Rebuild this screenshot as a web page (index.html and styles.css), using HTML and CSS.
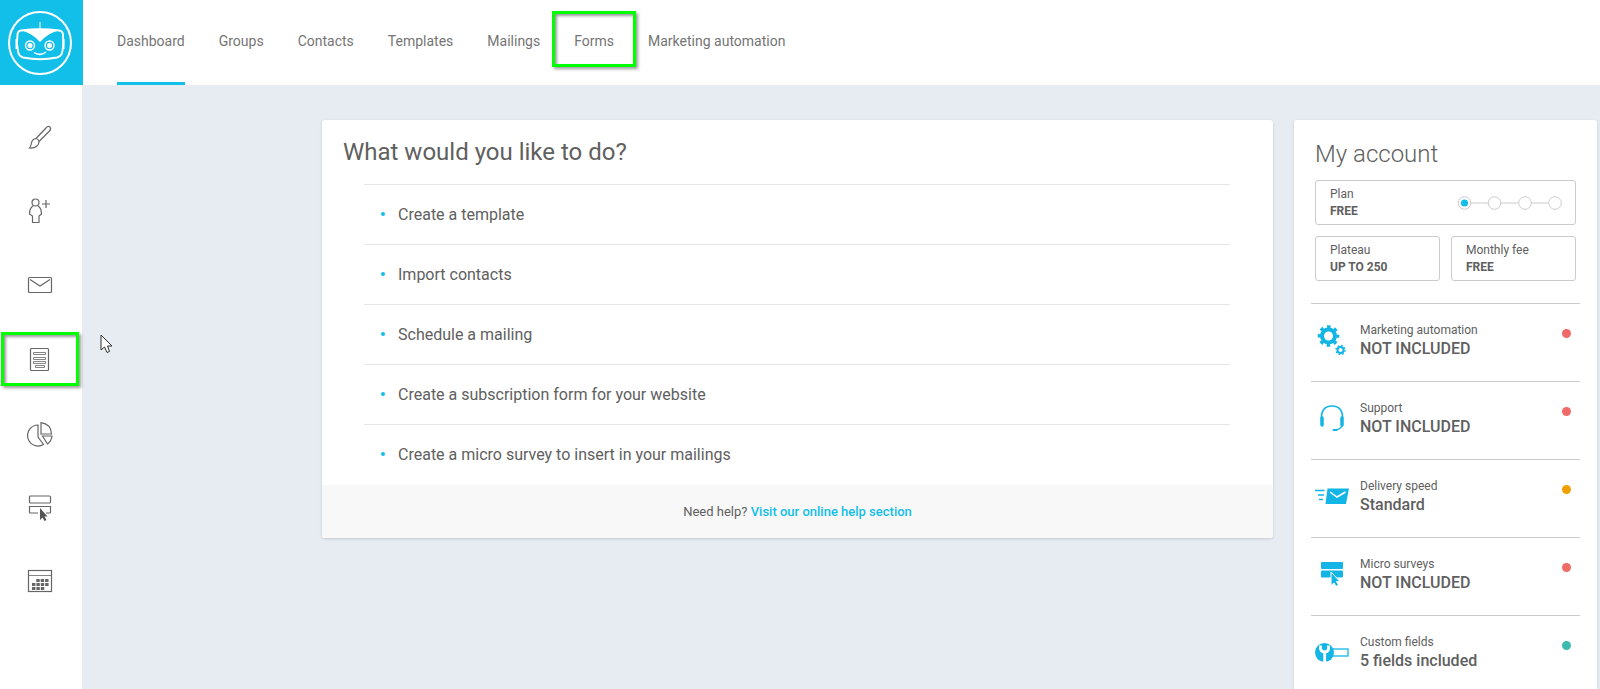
FILE: index.html
```html
<!DOCTYPE html>
<html lang="en">
<head>
    <meta charset="utf-8">
    <title>Dashboard</title>
    <meta name="viewport" content="width=device-width, initial-scale=1.0">
    <link rel="stylesheet" href="styles.css">
</head>
<body>
    <header class="topbar">
        <a href="#" class="logo" aria-label="Home">
            <svg width="66" height="66" viewBox="0 0 66 66" fill="none" stroke="#fff">
                <circle cx="33" cy="33" r="31" stroke-width="2"/>
                <path d="M33 12v9" stroke-width="1"/>
                <path d="M14 20.500Q33 18 52 20.500Q56 21 56 25Q57 33 55.500 41Q55 46 50 47.500Q33 51 16 47.500Q11.500 46 11 41Q9 33 10.500 25Q10.500 21 14 20.500Z" stroke-width="1.900"/>
                <path d="M16 21Q33 17 50 21Q40 24 33 32Q26 24 16 21Z" fill="#fff" stroke="none"/>
                <path d="M9.500 29v10M56.500 29v10" stroke-width="2"/>
                <circle cx="23" cy="35.500" r="4.500" stroke-width="1.400"/>
                <circle cx="42.500" cy="35.500" r="4.500" stroke-width="1.400"/>
                <circle cx="23" cy="35.500" r="2.500" fill="#fff" stroke="none"/>
                <circle cx="42.500" cy="35.500" r="2.500" fill="#fff" stroke="none"/>
                <path d="M27 42.500Q33 46.500 39 42" stroke-width="1.500"/>
            </svg>
        </a>
        <nav class="nav">
            <a href="#" class="active">Dashboard</a>
            <a href="#">Groups</a>
            <a href="#">Contacts</a>
            <a href="#">Templates</a>
            <a href="#">Mailings</a>
            <a href="#" class="marked">Forms</a>
            <a href="#">Marketing automation</a>
        </nav>
    </header>

    <div class="page">
        <nav class="sidebar">
            <a href="#" aria-label="Templates">
                <svg width="26" height="26" viewBox="0 0 26 26">
                    <path d="M9 14.500L19 4Q21 1.500 23 3Q24.500 5 22.500 7L12 17.500"/>
                    <path d="M9 14.500Q5 15 4.500 19Q4 22 2.500 24Q7 24.500 10 22Q12 20.500 12 17.500Q11.500 15 9 14.500Z"/>
                </svg>
            </a>
            <a href="#" aria-label="Contacts">
                <svg width="26" height="26" viewBox="0 0 26 26">
                    <circle cx="8.500" cy="4.500" r="3.500"/>
                    <path d="M6 8Q2.500 10 2.500 16L5.500 18V24.500H12V18L14.500 16Q14.500 10 11 8"/>
                    <path d="M19 2v8M15 6h8"/>
                </svg>
            </a>
            <a href="#" aria-label="Mailings">
                <svg width="26" height="26" viewBox="0 0 26 26">
                    <rect x="1.500" y="5.500" width="23" height="15" rx="1"/>
                    <path d="M3 7.500L13 14L23 7.500"/>
                </svg>
            </a>
            <a href="#" class="marked" aria-label="Forms">
                <svg width="26" height="26" viewBox="0 0 26 26">
                    <rect x="3.500" y="2.500" width="18" height="22" rx="1"/>
                    <path d="M6.500 6.500h12v2h-12zM6.500 11.500h12v2h-12zM6.500 15.500h12v2h-12zM8.500 19.500h9v2h-9z" stroke-width=".8"/>
                </svg>
            </a>
            <a href="#" aria-label="Reports">
                <svg width="26" height="28" viewBox="0 -3 26 28">
                    <path d="M11 3A10.500 10.500 0 1 0 16.500 22.500L11 15Z"/>
                    <path d="M14 .7V12H24.500Q24 2 14 .7Z"/>
                    <path d="M15.500 14H25Q24.500 19 20.500 22Z"/>
                </svg>
            </a>
            <a href="#" aria-label="Micro surveys">
                <svg width="26" height="26" viewBox="0 -1 26 26" overflow="visible">
                    <rect x="2.500" y="1" width="21" height="7" rx="1"/>
                    <path d="M11 18H3.500Q2.500 18 2.500 17V11.500H23.500V17Q23.500 18 22.500 18H19"/>
                    <path d="M13 13V25L15.500 22.500L17.500 26L19.500 25L17.500 21.500H20.500Z" fill="#555" stroke="none"/>
                </svg>
            </a>
            <a href="#" aria-label="Calendar">
                <svg width="26" height="26" viewBox="0 0 26 26">
                    <rect x="1.500" y="2.500" width="23" height="21"/>
                    <path d="M2 7.500h22" stroke-width=".8"/>
                    <path d="M9.300 12.500h12.700M5 16.500h17M5 20.500h12.500" stroke-width="3" stroke-dasharray="3.400 1"/>
                </svg>
            </a>
        </nav>

        <main class="content">
            <section class="card todo">
                <h1>What would you like to do?</h1>
                <ul class="actions">
                    <li><a href="#">Create a template</a></li>
                    <li><a href="#">Import contacts</a></li>
                    <li><a href="#">Schedule a mailing</a></li>
                    <li><a href="#">Create a subscription form for your website</a></li>
                    <li><a href="#">Create a micro survey to insert in your mailings</a></li>
                </ul>
                <p class="help">Need help? <a href="#">Visit our online help section</a></p>
            </section>

            <aside class="card account">
                <h2>My account</h2>
                <div class="boxes">
                    <div class="box plan">
                        <p>Plan<strong>FREE</strong></p>
                        <svg width="106" height="16" viewBox="0 0 106 16" fill="none" stroke="#ccc">
                            <path d="M14 8h17M44 8h17M74 8h17"/>
                            <circle cx="7.500" cy="8" r="6.300"/>
                            <circle cx="37.500" cy="8" r="6.300"/>
                            <circle cx="68" cy="8" r="6.300"/>
                            <circle cx="98" cy="8" r="6.300"/>
                            <circle cx="7.500" cy="8" r="3.600" fill="#12bfe8" stroke="none"/>
                        </svg>
                    </div>
                    <div class="box"><p>Plateau<strong>UP TO 250</strong></p></div>
                    <div class="box"><p>Monthly fee<strong>FREE</strong></p></div>
                </div>
                <ul class="features">
                    <li>
                        <svg width="34" height="32" viewBox="0 0 34 32" fill="none" stroke="#12b5e5">
                            <circle cx="13.500" cy="12" r="6.500" stroke-width="4"/>
                            <circle cx="13.500" cy="12" r="9.300" stroke-width="3" stroke-dasharray="3.600 3.704" stroke-dashoffset="1.800"/>
                            <circle cx="25.500" cy="26" r="3" stroke-width="2"/>
                            <circle cx="25.500" cy="26" r="4.500" stroke-width="1.500" stroke-dasharray="1.700 1.834"/>
                        </svg>
                        <p>Marketing automation<strong>NOT INCLUDED</strong></p>
                        <span class="dot red"></span>
                    </li>
                    <li>
                        <svg width="34" height="32" viewBox="0 0 34 32" fill="none" stroke="#12b5e5">
                            <path d="M6.500 17Q6 4 17 4Q28 4 27.500 17" stroke-width="1.700"/>
                            <path d="M7 16v7M27 16v7" stroke-width="3.500" stroke-linecap="round"/>
                            <path d="M27.500 23Q25 28 20 28" stroke-width="1.500"/>
                            <path d="M18.500 28h3" stroke-width="2" stroke-linecap="round"/>
                        </svg>
                        <p>Support<strong>NOT INCLUDED</strong></p>
                        <span class="dot red"></span>
                    </li>
                    <li>
                        <svg width="34" height="32" viewBox="0 0 34 32" fill="none" stroke="#12b5e5">
                            <path d="M0 10.500h9.500M3 15h6M4 19.500h4" stroke-width="1.300"/>
                            <path d="M12.500 8.500H34L31 24H10.500Z" fill="#12b5e5" stroke="none"/>
                            <path d="M15 12L22 17L30.500 12" stroke="#fff" stroke-width="1.500"/>
                        </svg>
                        <p>Delivery speed<strong>Standard</strong></p>
                        <span class="dot orange"></span>
                    </li>
                    <li>
                        <svg width="34" height="32" viewBox="0 0 34 32" fill="#12b5e5">
                            <rect x="6" y="4" width="22" height="7" rx="1"/>
                            <rect x="6" y="12.500" width="22" height="7" rx="1"/>
                            <path d="M16 14V27.500L19 25L21 28.500L23.500 27L21.500 23.500H25Z" stroke="#fff"/>
                        </svg>
                        <p>Micro surveys<strong>NOT INCLUDED</strong></p>
                        <span class="dot red"></span>
                    </li>
                    <li>
                        <svg width="34" height="32" viewBox="0 0 34 32" fill="none" stroke="#12b5e5">
                            <rect x="16" y="13" width="17" height="7" stroke-width="1.300"/>
                            <circle cx="9.500" cy="16.500" r="9.500" fill="#12b5e5" stroke="none"/>
                            <path d="M5.500 9.500V13Q6.500 16 9.700 16Q13 16 13.500 13V9.500M9.700 15V26" stroke="#fff" stroke-width="2.800"/>
                        </svg>
                        <p>Custom fields<strong>5 fields included</strong></p>
                        <span class="dot green"></span>
                    </li>
                </ul>
            </aside>
        </main>
    </div>

    <svg class="cursor" width="14" height="20" viewBox="0 0 14 20">
        <path d="M1 1V16L4.500 13L7 18.500L9.500 17.500L7.500 12H12Z" fill="#fff" stroke="#333"/>
    </svg>
</body>
</html>
```
FILE: styles.css
```css
* {
    box-sizing: border-box;
}
body {
    font-family: Roboto, "Liberation Sans", sans-serif;
    margin: 0;
    min-height: 100vh;
    display: flex;
    flex-direction: column;
    color: #606060;
    background: #e6ecf2;
}
h1, h2, p, ul {
    margin: 0;
    padding: 0;
}
ul {
    list-style: none;
}
a {
    color: inherit;
    text-decoration: none;
}
svg {
    display: block;
    flex-shrink: 0;
}
.topbar {
    display: flex;
    height: 85px;
    background: #fff;
}
.logo {
    width: 83px;
    background: #12bfe8;
    display: flex;
    align-items: center;
    padding-left: 7px;
}
.nav {
    display: flex;
    gap: 34px;
    padding-left: 34px;
    font-size: 14px;
    color: #757575;
}
.nav a {
    display: flex;
    align-items: center;
    border-bottom: 3px solid transparent;
}
.nav a.active {
    border-bottom-color: #12bfe8;
}
/* green highlight frames */
.marked {
    position: relative;
}
.marked::after {
    content: "";
    position: absolute;
    border: 3px solid #0f0;
    box-shadow: 2px 2px 3px rgba(0, 0, 0, 0.4), inset 2px 2px 3px rgba(0, 0, 0, 0.4);
}
.nav .marked::after {
    top: 11px;
    bottom: 15px;
    left: -22px;
    right: -22px;
}
.sidebar .marked::after {
    top: 10px;
    bottom: 10px;
    left: 1px;
    right: 3px;
}
.page {
    flex: 1;
    display: flex;
}
.sidebar {
    width: 82px;
    flex-shrink: 0;
    padding-top: 15px;
    background: #fff;
}
.sidebar a {
    display: flex;
    align-items: center;
    height: 74px;
    padding-left: 27px;
}
.sidebar svg {
    fill: none;
    stroke: #666;
    stroke-width: 1.2;
}
.content {
    flex: 1;
    display: flex;
    align-items: flex-start;
    gap: 21px;
    padding: 35px 3px 0 240px;
}
.card {
    background: #fff;
    border-radius: 3px;
    box-shadow: 0 1px 3px rgba(0, 0, 0, 0.15);
}
.todo {
    flex: 1;
}
.todo h1 {
    padding: 16px 21px;
    font-size: 24px;
    line-height: 32px;
    font-weight: 400;
}
.actions {
    margin: 0 43px 0 42px;
}
.actions li {
    display: flex;
    align-items: center;
    gap: 13px;
    padding-left: 17px;
    border-top: 1px solid #e6e6e6;
    font-size: 16px;
    line-height: 59px;
}
.actions li:last-child {
    line-height: 60px;
}
.actions li::before {
    content: "";
    width: 4px;
    height: 4px;
    margin-bottom: 2px;
    border-radius: 50%;
    background: #12bfe8;
}
.help {
    background: #f8f8f8;
    border-radius: 0 0 3px 3px;
    text-align: center;
    font-size: 13px;
    line-height: 53px;
}
.help a {
    color: #12bfe8;
    font-weight: 500;
}
.account {
    width: 303px;
    flex-shrink: 0;
    align-self: stretch;
    border-radius: 3px 3px 0 0;
    padding: 18px 17px 0;
}
.account h2 {
    padding-left: 4px;
    font-size: 24px;
    line-height: 32px;
    font-weight: 300;
}
.boxes {
    display: grid;
    grid-template-columns: 1fr 1fr;
    gap: 11px;
    padding: 10px 4px 22px;
}
.box {
    border: 1px solid #ccc;
    border-radius: 3px;
    padding: 5px 14px 4px;
    font-size: 12px;
    line-height: 17px;
}
.box strong, .features strong {
    display: block;
    font-weight: 700;
}
.plan {
    grid-column: 1 / 3;
    display: flex;
    align-items: center;
    justify-content: space-between;
    padding-right: 12px;
}
.features li {
    display: flex;
    height: 78px;
    padding: 16px 9px 0 4px;
    border-top: 1px solid #ccc;
    font-size: 12px;
    line-height: 20px;
}
.features li:last-child {
    height: 72px;
}
.features svg {
    margin-top: 4px;
}
.features p {
    flex: 1;
    padding-left: 11px;
}
.features strong {
    font-size: 16px;
    line-height: 18px;
    font-weight: 500;
}
.dot {
    width: 9px;
    height: 9px;
    margin-top: 9px;
    border-radius: 50%;
}
.red {
    background: #ee6b67;
}
.orange {
    background: #f0a000;
}
.green {
    background: #3cbab2;
}
.cursor {
    position: absolute;
    left: 100px;
    top: 334px;
}
```
